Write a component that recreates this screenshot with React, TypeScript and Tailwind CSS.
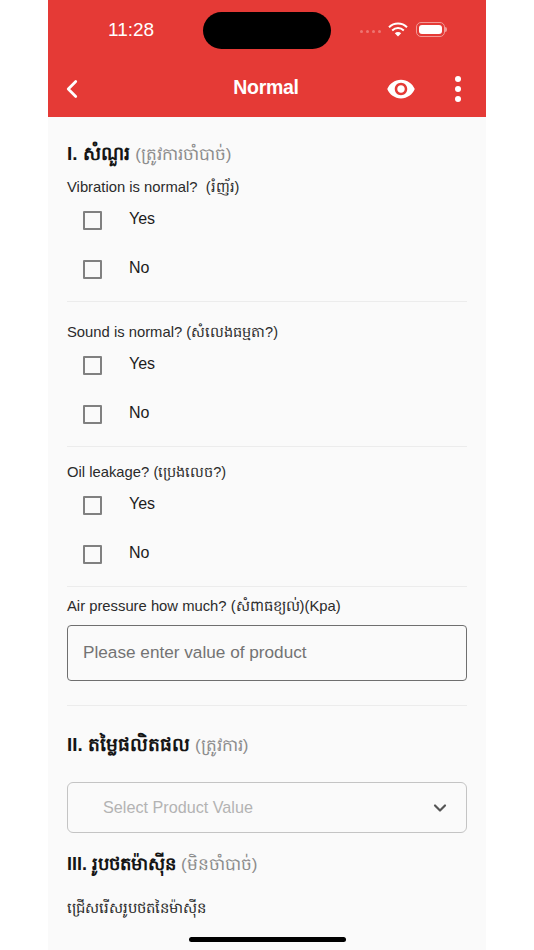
import React from 'react';
import { ChevronLeft, ChevronDown } from 'lucide-react';

const font = { fontFamily: '"Liberation Sans", "Noto Sans", "DejaVu Sans", sans-serif' };

const CheckRow: React.FC<{ label: string }> = ({ label }) => (
  <div className="flex items-center pl-[16px] h-[49px]">
    <span className="w-[19px] h-[19px] border-2 border-[#808080] rounded-[1px]" />
    <span className="ml-[27px] text-[16px] leading-none text-[#1c1c1c] -mt-[3px]">{label}</span>
  </div>
);

const Question: React.FC<{ label: string; note: string; labelClass: string }> = ({ label, note, labelClass }) => (
  <div className="border-b border-[#ececec] pb-[7px]">
    <p className={`-mb-[1px] text-[14.8px] leading-[20px] text-[#2b2b2b] whitespace-pre ${labelClass}`}>
      {label} <span className="text-[14.5px]">{note}</span>
    </p>
    <CheckRow label="Yes" />
    <CheckRow label="No" />
  </div>
);

const Title: React.FC<{ title: string; note: string; className: string }> = ({ title, note, className }) => (
  <h2 className={`leading-[28px] font-bold text-[#151515] ${className}`}>
    {title} <span className="text-[17px] font-normal text-[#8c8c8c]">{note}</span>
  </h2>
);

export default function App() {
  return (
    <div className="flex justify-center bg-white h-[950px] overflow-hidden" style={font}>
      <div className="relative w-[438px] h-[950px] bg-[#fafafa] overflow-hidden">
        {/* Header */}
        <div className="h-[117px] bg-[#e53a36] text-white">
          <div className="flex items-center h-[60px] pl-[60px] pr-[41px]">
            <span className="text-[19px] font-medium w-[95px]">11:28</span>
            <div className="w-[128px] h-[37px] rounded-full bg-black ml-0" />
            <div className="ml-auto flex items-center -mt-[1px]">
              <span className="flex gap-[3px] mr-[7px] mt-[3px]">
                <i className="w-[3px] h-[3px] rounded-full bg-[#ee7572]" />
                <i className="w-[3px] h-[3px] rounded-full bg-[#ee7572]" />
                <i className="w-[3px] h-[3px] rounded-full bg-[#ee7572]" />
                <i className="w-[3px] h-[3px] rounded-full bg-[#ee7572]" />
              </span>
              <svg width="20" height="15" viewBox="0 0 20 15" className="mr-[8px]">
                <path d="M1 5.2a13 13 0 0 1 18 0" fill="none" stroke="white" strokeWidth="2" />
                <path d="M4.2 8.4a8.5 8.5 0 0 1 11.6 0" fill="none" stroke="white" strokeWidth="2" />
                <path d="M10 14.5 6.8 11.3a4.5 4.5 0 0 1 6.4 0Z" fill="white" />
              </svg>
              <div className="relative w-[29px] h-[15px] rounded-[5px] border border-[#f29a97] p-[2px]">
                <div className="w-full h-full rounded-[3px] bg-white" />
                <span className="absolute -right-[3px] top-[4px] w-[2px] h-[5px] rounded-r-sm bg-[#f29a97]" />
              </div>
            </div>
          </div>
          <div className="flex items-center h-[57px] pl-[9px] pr-[25px]">
            <ChevronLeft size={30} strokeWidth={2.2} className="text-white" />
            <span className="flex-1 text-center text-[19.5px] font-bold tracking-[-0.3px] -mt-[2px] ml-[59px]">Normal</span>
            <svg width="30" height="30" viewBox="0 0 24 24" fill="white" className="mr-[39px]">
              <path d="M12 4.5C7 4.5 2.73 7.61 1 12c1.73 4.39 6 7.5 11 7.5s9.27-3.11 11-7.5c-1.73-4.39-6-7.5-11-7.5zM12 17c-2.76 0-5-2.24-5-5s2.24-5 5-5 5 2.24 5 5-2.24 5-5 5zm0-8c-1.66 0-3 1.34-3 3s1.34 3 3 3 3-1.34 3-3-1.34-3-3-3z" />
            </svg>
            <span className="flex flex-col gap-[4px]">
              <i className="w-[6px] h-[6px] rounded-full bg-white" />
              <i className="w-[6px] h-[6px] rounded-full bg-white" />
              <i className="w-[6px] h-[6px] rounded-full bg-white" />
            </span>
          </div>
        </div>

        {/* Form */}
        <div className="px-[19px]">
          <Title title="I. សំណួរ" note="(ត្រូវការចាំបាច់)" className="mt-[23px] text-[19px]" />
          <Question label="Vibration is normal? " note="(រំញ័រ)" labelClass="mt-[8px]" />
          <Question label="Sound is normal?" note="(សំលេងធម្មតា?)" labelClass="mt-[20px]" />
          <Question label="Oil leakage?" note="(ប្រេងលេច?)" labelClass="mt-[15px]" />
          <p className="mt-[9px] text-[14.8px] leading-[20px] text-[#2b2b2b]">Air pressure how much? (សំពាធខ្យល់)(Kpa)</p>
          <div className="mt-[9px] h-[56px] rounded-[4px] border border-[#6f6f6f] flex items-center pl-[15px] text-[17.2px] text-[#737373]">
            Please enter value of product
          </div>
          <div className="mt-[24px] border-t border-[#ececec]" />
          <Title title="II. តម្លៃផលិតផល" note="(ត្រូវការ)" className="mt-[25px] text-[18.7px]" />
          <div className="mt-[22px] h-[51px] rounded-[6px] border border-[#c4c4c4] flex items-center pl-[35px] pr-[16px] text-[16.2px] text-[#b3b3b3]">
            <span className="flex-1">Select Product Value</span>
            <ChevronDown size={20} strokeWidth={2.6} className="text-[#555555]" />
          </div>
          <Title title="III. រូបថតម៉ាស៊ីន" note="(មិនចាំបាច់)" className="mt-[17px] text-[18px]" />
          <p className="mt-[19px] text-[14.8px] leading-[20px] text-[#2b2b2b]">ជ្រើសរើសរូបថតនៃម៉ាស៊ីន</p>
        </div>

        {/* Home indicator */}
        <div className="absolute bottom-[8px] left-[141px] w-[157px] h-[5px] rounded-full bg-black" />
      </div>
    </div>
  );
}
